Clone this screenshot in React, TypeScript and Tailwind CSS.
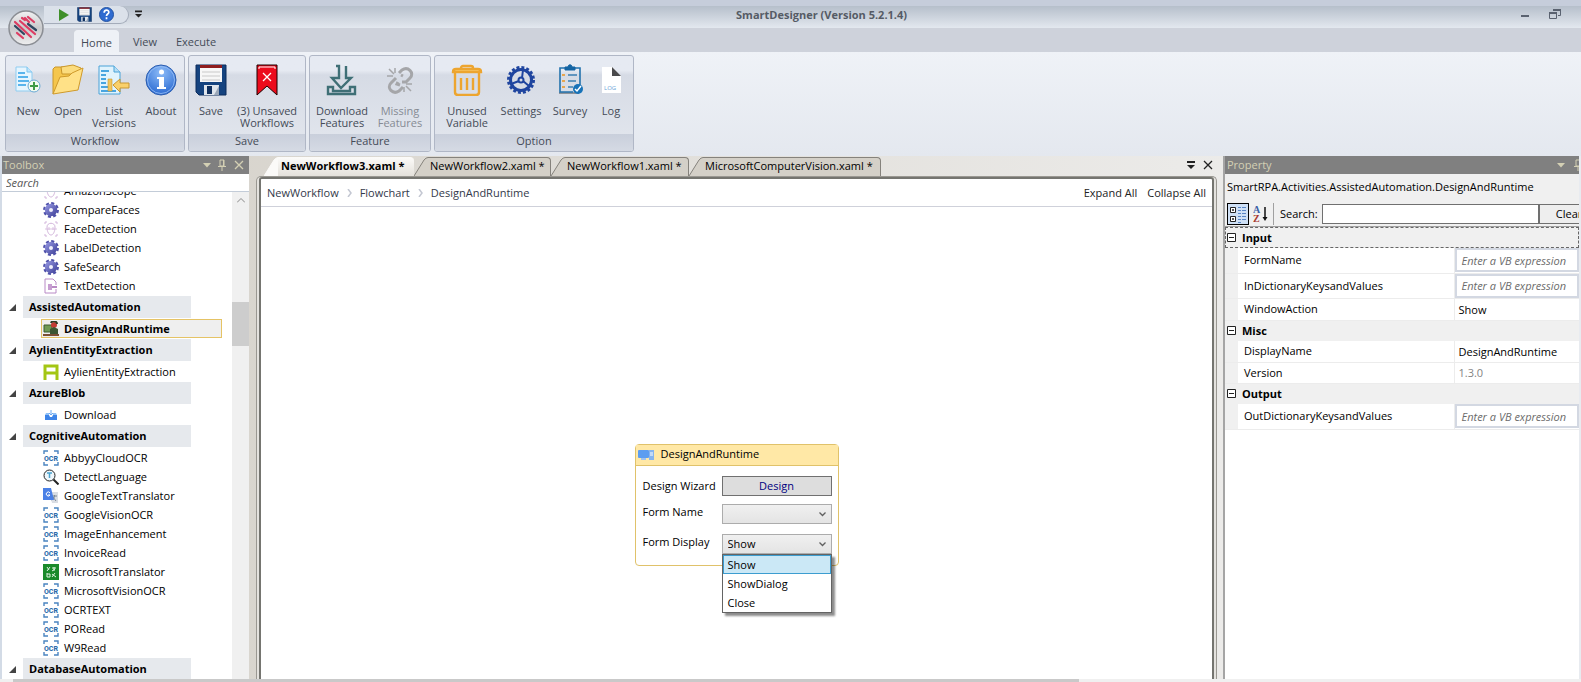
import React from "react";

type IconProps = { className?: string };

/* ---------- ribbon icons ---------- */

const FloppyIcon: React.FC<IconProps> = ({ className }) => (
  <svg viewBox="0 0 32 32" className={className}>
    <path d="M1 1h30v30H4l-3-3z" fill="#15437f" stroke="#0d2d5c" />
    <rect x="5" y="1" width="22" height="3" fill="#8f1d1f" />
    <rect x="5" y="4" width="22" height="14" fill="#f7f7f7" />
    <path d="M7 8h18M7 12h18M7 16h18" stroke="#c9c9c9" />
    <rect x="9" y="21" width="15" height="10" fill="#dfe5ec" />
    <rect x="12" y="22" width="5" height="8" fill="#0f2f5e" />
    <path d="M19 31l5-9v9z" fill="#9aa7b8" />
  </svg>
);

const NewIcon = () => (
  <svg viewBox="0 0 32 32" className="h-8 w-8">
    <path d="M4 3h11l5 5v19H4z" fill="#e6f5fe" stroke="#8fcdf1" />
    <path d="M15 3v5h5" fill="#bfe4fa" stroke="#7cc4ee" />
    <path d="M6 9h7M6 13h10M6 17h11M6 21h8" stroke="#58b4ec" strokeWidth="2" />
    <circle cx="22" cy="22" r="6" fill="#f2faf0" stroke="#6aa9d4" />
    <path d="M22 18v8M18 22h8" stroke="#3f9b46" strokeWidth="2" />
  </svg>
);

const OpenIcon = () => (
  <svg viewBox="0 0 32 32" className="h-8 w-8">
    <path d="M1 30V5l2-2h8l2 2h15v7" fill="#f5c64d" stroke="#c9962a" />
    <path d="M9 3l12-2 8 3v6H10z" fill="#fbdc7e" stroke="#c9962a" />
    <path d="M1 30L8 13l9-1 3-3 11-5-5 22z" fill="#ffe187" stroke="#cf9a2b" />
  </svg>
);

const VersionsIcon = () => (
  <svg viewBox="0 0 32 32" className="h-8 w-8">
    <path d="M1 2h15l6 6v22H1z" fill="#e0f3fd" stroke="#4ba3d8" />
    <path d="M16 2v6h6" fill="#b5def5" stroke="#4ba3d8" />
    <path d="M3 7h8M3 11h5M3 15h5M3 19h5M3 23h8M3 27h15" stroke="#48a5e0" strokeWidth="2" />
    <path d="M10 15h4v12h-4z" fill="#f3c65b" stroke="#c89732" strokeWidth=".6" />
    <path d="M15 21l7-6v4h9v5h-9v4z" fill="#fad06a" stroke="#c89732" />
  </svg>
);

const AboutIcon = () => (
  <svg viewBox="0 0 32 32" className="h-8 w-8">
    <defs>
      <radialGradient id="about" cx=".5" cy=".25" r=".8">
        <stop offset="0" stopColor="#8dbcf8" />
        <stop offset="1" stopColor="#2465cf" />
      </radialGradient>
    </defs>
    <circle cx="16" cy="16" r="15" fill="url(#about)" stroke="#2a5cae" />
    <circle cx="16" cy="16" r="13.500" fill="none" stroke="#9cc2f5" strokeWidth=".8" />
    <circle cx="16.500" cy="8" r="2.500" fill="#fff" />
    <path d="M12 13h7v10h2v2h-9v-2h2v-8h-2z" fill="#fff" />
  </svg>
);

const UnsavedIcon = () => (
  <svg viewBox="0 0 32 32" className="h-8 w-8">
    <path d="M6 1h20v30l-10-9-10 9z" fill="#ec0b1c" stroke="#1b0000" />
    <path d="M8 5V3h16v2" fill="none" stroke="#fff" />
    <path d="M12 9l8 8M20 9l-8 8" stroke="#fff" strokeWidth="1.300" />
  </svg>
);

const DownloadIcon = () => (
  <svg viewBox="0 0 32 32" className="h-8 w-8" fill="none" stroke="#3f6f76" strokeWidth="2.400">
    <path d="M10 2h3v12H6l9 10 10-10h-5V2" />
    <path d="M2 23h5v4h17v-4h5v7H2z" />
  </svg>
);

const MissingIcon = () => (
  <svg viewBox="0 0 32 32" className="h-8 w-8" fill="none" stroke="#a5a6a9" strokeWidth="3">
    <path d="M15 9l3-3c6-4 13 3 8 8l-4 4h-4" />
    <path d="M12 14l-5 5c-5 5 2 12 8 8l4-4" />
    <path d="M14 18l-1 2 3 1M19 12l-2-1" />
    <path d="M11 4v5M3 12h6M5 5l5 5M22 22l5 5M22 20h6M20 23v5" strokeWidth="1.500" />
  </svg>
);

const TrashIcon = () => (
  <svg viewBox="0 0 32 32" className="h-8 w-8" fill="none" stroke="#eda52f" strokeWidth="2.400">
    <path d="M10 5V4c0-1 1-2 2-2h8c1 0 2 1 2 2v1" />
    <path d="M2 8c0-2 1-3 3-3h22c2 0 3 1 3 3z" fill="#fbd27a" />
    <path d="M4 9v19c0 2 1 3 3 3h18c2 0 3-1 3-3V9" />
    <path d="M10 14v12M16 14v12M22 14v12" strokeWidth="2.400" />
  </svg>
);

const SettingsIcon = () => (
  <svg viewBox="0 0 32 32" className="h-8 w-8" fill="none" stroke="#1f459f">
    <circle cx="16" cy="16" r="12.500" strokeWidth="3" strokeDasharray="2.900 2.010" />
    <circle cx="16" cy="16" r="10.500" strokeWidth="3" />
    <circle cx="16" cy="16" r="2.500" strokeWidth="2" />
    <path d="M18 17l6 5M14 17l-8 3M17 14l1-8" strokeWidth="2" />
  </svg>
);

const SurveyIcon = () => (
  <svg viewBox="0 0 32 32" className="h-8 w-8" fill="none">
    <path d="M5 29h20" stroke="#8d9299" strokeWidth="2" />
    <path d="M11 4H6v24h13M21 4h5v17" stroke="#2272ad" strokeWidth="1.600" />
    <path d="M11 6V3h3c0-3 4-3 4 0h3v3z" fill="#1565a3" stroke="#1565a3" />
    <path d="M8 11h3M8 17h3M8 23h3" stroke="#e7a650" strokeWidth="2" />
    <path d="M14 11h9M14 17h8M14 23h5" stroke="#3b7fb2" strokeWidth="1.600" />
    <circle cx="24" cy="25" r="5" fill="#1772b8" />
    <path d="M21 25l2 2 4-5" stroke="#fff" strokeWidth="1.500" />
  </svg>
);

const LogIcon = () => (
  <svg viewBox="0 0 32 32" className="h-8 w-8">
    <path d="M7 3h10l9 9v17H7z" fill="#fff" />
    <path d="M17 3l9 9h-9z" fill="#4a4a4c" />
    <text x="9" y="26" fontSize="6" fill="#6da5d8" className="font-['Open_Sans',sans-serif]">LOG</text>
  </svg>
);

/* ---------- toolbox icons ---------- */

const GearIcon = () => (
  <svg viewBox="0 0 16 16" className="h-4 w-4">
    <defs>
      <linearGradient id="gear" x1="0" y1="0" x2="1" y2="1">
        <stop offset="0" stopColor="#9a9ce6" />
        <stop offset="1" stopColor="#3d3f97" />
      </linearGradient>
    </defs>
    <circle cx="8" cy="8" r="6.700" fill="none" stroke="#5052ab" strokeWidth="2.500" strokeDasharray="3 2.260" />
    <circle cx="8" cy="8" r="6.200" fill="url(#gear)" />
    <circle cx="8" cy="8" r="2" fill="#f0f0fc" />
  </svg>
);

const FaceIcon = () => (
  <svg viewBox="0 0 16 16" className="h-4 w-4" fill="none" stroke="#d3b6dc">
    <path d="M2 3V1h2M12 1h2v2M2 13v2h2M12 15h2v-2" />
    <path d="M4 6c0-5 8-5 8 0 0 5-2 8-4 8s-4-3-4-8z" />
    <path d="M2 8h12M6 6v3M10 6v3" strokeWidth=".8" />
  </svg>
);

const TextDocIcon = () => (
  <svg viewBox="0 0 16 16" className="h-4 w-4" fill="none" stroke="#b98ac6">
    <path d="M2 1h8l3 3v3M13 11v4H2V1" />
    <path d="M5 6h4v6H5z" fill="#c79ed1" stroke="none" />
    <path d="M9 9h5" strokeWidth="2" />
  </svg>
);

const RuntimeIcon = () => (
  <svg viewBox="0 0 16 16" className="h-4 w-4">
    <path d="M1 4h8v7H1z" fill="#6f9a55" stroke="#3d5b2e" />
    <circle cx="11" cy="4" r="3" fill="#c33a34" />
    <path d="M8 2c1-3 6-2 6 1" stroke="#2f3a25" strokeWidth="2" fill="none" />
    <path d="M7 8l4-2 4 2v5H7z" fill="#3c5633" />
    <path d="M0 13h16v2H0z" fill="#7b4f36" />
  </svg>
);

const AylienIcon = () => (
  <svg viewBox="0 0 16 16" className="h-4 w-4" fill="none" stroke="#a3c614" strokeWidth="3">
    <path d="M2 16V2h12v14M2 9h12" />
  </svg>
);

const BlobIcon = () => (
  <svg viewBox="0 0 16 16" className="h-4 w-4">
    <path d="M2 8l1-2h3v2zM14 8l-1-2h-3v2z" fill="#8fc0f7" />
    <path d="M2 8h4l1 2h2l1-2h4v5H2z" fill="#3d84e8" />
    <path d="M8 3v5M6 6l2 2 2-2" stroke="#6aa7ef" fill="none" />
  </svg>
);

const OcrIcon = () => (
  <svg viewBox="0 0 16 16" className="h-4 w-4" fill="none" stroke="#4a84c0">
    <path d="M1 4V1h4M11 1h4v3M1 12v3h4M11 15h4v-3" strokeWidth="1.400" />
    <text x="8" y="10.500" fontSize="7" fontWeight="800" textAnchor="middle" stroke="none" fill="#2b6cab" className="font-['Roboto',sans-serif]">OCR</text>
  </svg>
);

const DetectIcon = () => (
  <svg viewBox="0 0 16 16" className="h-4 w-4" fill="none" stroke="#222">
    <circle cx="6.500" cy="6.500" r="5.500" fill="#eef6fb" />
    <path d="M4 4h5M6.500 4v5" stroke="#4aa3cf" strokeWidth="1.500" />
    <path d="M10.500 10.500l5 5" strokeWidth="2" />
  </svg>
);

const TranslateIcon = () => (
  <svg viewBox="0 0 16 16" className="h-4 w-4">
    <path d="M6 4h9v11H9z" fill="#d9dde3" />
    <path d="M9 8h5M11.500 7c0 3-1 4-3 5M10 9l3 4" stroke="#7a8794" fill="none" />
    <path d="M0 0h8l3 12H0z" fill="#4a80e6" />
    <path d="M7 5a2 2 0 1 0 0 2H5" stroke="#fff" fill="none" />
  </svg>
);

const MsTranslatorIcon = () => (
  <svg viewBox="0 0 16 16" className="h-4 w-4">
    <rect width="16" height="16" fill="#1a8a2b" />
    <path d="M4 3l2 3M7 3L4 7M9 4h4M11 3v4M9 7l3-2M4 9v4M4 10h3v3H4M9 10l4 3M12 9l-3 4" stroke="#dff3e0" fill="none" />
  </svg>
);

const PinIcon: React.FC<IconProps> = ({ className }) => (
  <svg viewBox="0 0 10 12" className={className} fill="none" stroke="#d4d0b4">
    <path d="M3 1h4v6H3zM6.500 1v6M1 7.500h8M5 8v4" />
  </svg>
);

const CloseIcon: React.FC<IconProps> = ({ className }) => (
  <svg viewBox="0 0 10 10" className={className} fill="none" stroke="currentColor" strokeWidth="1.300">
    <path d="M1 1l8 8M9 1L1 9" />
  </svg>
);

const TriangleIcon: React.FC<IconProps> = ({ className }) => (
  <svg viewBox="0 0 8 5" className={className} fill="currentColor">
    <path d="M0 0h8L4 4.500z" />
  </svg>
);

const OverflowIcon: React.FC<IconProps> = ({ className }) => (
  <svg viewBox="0 0 8 8" className={className} fill="currentColor">
    <path d="M0 0h8v2H0zM0 4h8L4 8z" />
  </svg>
);

const HelpIcon = () => (
  <svg viewBox="0 0 16 16" className="h-[15px] w-[15px]">
    <circle cx="8" cy="8" r="7.500" fill="#2f6bd0" stroke="#204f9e" />
    <path d="M5.500 6c0-3.500 5-3.500 5-.500 0 2-2.500 2-2.500 4M8 11v2" stroke="#fff" strokeWidth="1.800" fill="none" />
  </svg>
);

const LogoIcon = () => (
  <svg viewBox="0 0 36 36" className="h-9 w-9" fill="none" strokeLinecap="round" strokeWidth="2.200">
    <defs>
      <linearGradient id="orb" x1="0" y1="0" x2="0" y2="1">
        <stop offset="0" stopColor="#f2f2f3" />
        <stop offset=".5" stopColor="#c9cacc" />
        <stop offset="1" stopColor="#eeeeef" />
      </linearGradient>
    </defs>
    <circle cx="18" cy="18" r="17" fill="url(#orb)" stroke="#8b8e94" strokeWidth="1.500" />
    <path d="M20 7l6 5M14 8l3 2M12 11l15 13M7 12l16 15M9 23l6 5M17 8l4 4" stroke="#dd3c62" />
    <path d="M20 14l8 6M7 16l9 8" stroke="#2f4660" />
  </svg>
);

/* ---------- data ---------- */

interface RibbonItem {
  lines: string[];
  icon: React.ReactNode;
  width: string;
  disabled?: boolean;
}

interface RibbonGroup {
  title: string;
  padding: string;
  items: RibbonItem[];
}

const ribbonGroups: RibbonGroup[] = [
  {
    title: "Workflow",
    padding: "px-0.5",
    items: [
      { lines: ["New"], icon: <NewIcon />, width: "w-10" },
      { lines: ["Open"], icon: <OpenIcon />, width: "w-10" },
      { lines: ["List", "Versions"], icon: <VersionsIcon />, width: "w-[52px]" },
      { lines: ["About"], icon: <AboutIcon />, width: "w-[42px]" },
    ],
  },
  {
    title: "Save",
    padding: "px-0.5",
    items: [
      { lines: ["Save"], icon: <FloppyIcon className="h-8 w-8" />, width: "w-10" },
      { lines: ["(3) Unsaved", "Workflows"], icon: <UnsavedIcon />, width: "w-[72px]" },
    ],
  },
  {
    title: "Feature",
    padding: "px-0.5",
    items: [
      { lines: ["Download", "Features"], icon: <DownloadIcon />, width: "w-[60px]" },
      { lines: ["Missing", "Features"], icon: <MissingIcon />, width: "w-[56px]", disabled: true },
    ],
  },
  {
    title: "Option",
    padding: "pl-1.5 pr-0.5",
    items: [
      { lines: ["Unused", "Variable"], icon: <TrashIcon />, width: "w-[52px]" },
      { lines: ["Settings"], icon: <SettingsIcon />, width: "w-14" },
      { lines: ["Survey"], icon: <SurveyIcon />, width: "w-[42px]" },
      { lines: ["Log"], icon: <LogIcon />, width: "w-10" },
    ],
  },
];

interface ToolGroup {
  name?: string;
  items: { name: string; icon: React.ReactNode; selected?: boolean }[];
}

const toolGroups: ToolGroup[] = [
  {
    items: [
      { name: "AmazonScope", icon: <FaceIcon /> },
      { name: "CompareFaces", icon: <GearIcon /> },
      { name: "FaceDetection", icon: <FaceIcon /> },
      { name: "LabelDetection", icon: <GearIcon /> },
      { name: "SafeSearch", icon: <GearIcon /> },
      { name: "TextDetection", icon: <TextDocIcon /> },
    ],
  },
  {
    name: "AssistedAutomation",
    items: [{ name: "DesignAndRuntime", icon: <RuntimeIcon />, selected: true }],
  },
  {
    name: "AylienEntityExtraction",
    items: [{ name: "AylienEntityExtraction", icon: <AylienIcon /> }],
  },
  { name: "AzureBlob", items: [{ name: "Download", icon: <BlobIcon /> }] },
  {
    name: "CognitiveAutomation",
    items: [
      { name: "AbbyyCloudOCR", icon: <OcrIcon /> },
      { name: "DetectLanguage", icon: <DetectIcon /> },
      { name: "GoogleTextTranslator", icon: <TranslateIcon /> },
      { name: "GoogleVisionOCR", icon: <OcrIcon /> },
      { name: "ImageEnhancement", icon: <OcrIcon /> },
      { name: "InvoiceRead", icon: <OcrIcon /> },
      { name: "MicrosoftTranslator", icon: <MsTranslatorIcon /> },
      { name: "MicrosoftVisionOCR", icon: <OcrIcon /> },
      { name: "OCRTEXT", icon: <OcrIcon /> },
      { name: "PORead", icon: <OcrIcon /> },
      { name: "W9Read", icon: <OcrIcon /> },
    ],
  },
  { name: "DatabaseAutomation", items: [] },
];

const docTabs = [
  { name: "NewWorkflow3.xaml *", width: "w-[150px]", active: true },
  { name: "NewWorkflow2.xaml *", width: "w-[137px]" },
  { name: "NewWorkflow1.xaml *", width: "w-[138px]" },
  { name: "MicrosoftComputerVision.xaml *", width: "w-[192px]" },
];

interface Property {
  name: string;
  kind: "expression" | "text" | "readonly";
  value?: string;
  height: string;
}

const propertySections: { title: string; focused?: boolean; rows: Property[] }[] = [
  {
    title: "Input",
    focused: true,
    rows: [
      { name: "FormName", kind: "expression", height: "h-[25px]" },
      { name: "InDictionaryKeysandValues", kind: "expression", height: "h-[25px]" },
      { name: "WindowAction", kind: "text", value: "Show", height: "h-[22px]" },
    ],
  },
  {
    title: "Misc",
    rows: [
      { name: "DisplayName", kind: "text", value: "DesignAndRuntime", height: "h-[21px]" },
      { name: "Version", kind: "readonly", value: "1.3.0", height: "h-[21px]" },
    ],
  },
  {
    title: "Output",
    rows: [{ name: "OutDictionaryKeysandValues", kind: "expression", height: "h-[25px]" }],
  },
];

/* ---------- sections ---------- */

const TitleBar = () => (
  <div className="border-t-[6px] border-[#c6cddb] bg-gradient-to-b from-[#b6bfcb] to-[#e3e8ef]">
    <div className="flex h-[22px] items-start pl-11">
      <div className="flex h-[18px] w-[85px] items-center gap-[7px] rounded-r-full border-b border-r border-[#a4acba] bg-[#dbe1ea] pl-3.5">
        <button aria-label="Run">
          <svg viewBox="0 0 12 12" className="h-3 w-3">
            <path d="M1 0l10 6-10 6z" fill="#3f8f2a" />
          </svg>
        </button>
        <button aria-label="Save workflow">
          <FloppyIcon className="h-[15px] w-[15px]" />
        </button>
        <button aria-label="Help">
          <HelpIcon />
        </button>
      </div>
      <button aria-label="Customize toolbar" className="ml-1.5 mt-1">
        <OverflowIcon className="h-2 w-[7px] text-[#222]" />
      </button>
      <h1 className="flex-1 pr-5 text-center font-bold leading-[18px] text-[#555b65]">
        SmartDesigner (Version 5.2.1.4)
      </h1>
      <div className="flex items-center gap-5 pr-5 pt-0.5 text-[#5a6270]">
        <button aria-label="Minimize">
          <svg viewBox="0 0 8 12" className="h-3 w-2">
            <path d="M0 7h8v2H0z" fill="currentColor" />
          </svg>
        </button>
        <button aria-label="Restore">
          <svg viewBox="0 0 12 12" className="h-3 w-3" fill="none" stroke="currentColor">
            <path d="M4.500 3V1.500h7v6H9" />
            <path d="M4 2h8" strokeWidth="2" />
            <path d="M.5 5.500h7v5h-7z" />
            <path d="M0 5h8" strokeWidth="2" />
          </svg>
        </button>
      </div>
    </div>
  </div>
);

const Ribbon = () => (
  <header className="relative shrink-0 text-[#444b57]">
    <TitleBar />
    <button aria-label="Application menu" className="absolute left-2 top-2.5">
      <LogoIcon />
    </button>
    <nav className="flex h-6 items-end bg-[#ced2db] pl-[74px]">
      <button className="h-[22px] w-[45px] rounded-t border border-b-0 border-[#eef1f6] bg-[#eef1f6] pt-0.5">Home</button>
      <button className="ml-[7px] h-[22px] w-[38px] pt-0.5">View</button>
      <button className="ml-1 h-[22px] w-14 pt-0.5">Execute</button>
    </nav>
    <div className="flex gap-[3px] bg-gradient-to-b from-[#eff2f7] to-[#e4e8ef] px-[5px] pb-1 pt-[3px]">
      {ribbonGroups.map((group) => (
        <section
          key={group.title}
          className="flex flex-col overflow-hidden rounded-[3px] border border-[#b0b7c6] bg-gradient-to-b from-[#e6eaf2] from-15% via-[#d6dbe5] via-20% to-[#e3e7ee]"
        >
          <div className={`flex h-[78px] pt-2 ${group.padding}`}>
            {group.items.map((item) => (
              <button
                key={item.lines.join(" ")}
                disabled={item.disabled}
                className={`flex flex-col items-center whitespace-nowrap leading-3 ${item.width} ${
                  item.disabled ? "text-[#868b94]" : ""
                }`}
              >
                {item.icon}
                <span className="pt-[9px]">
                  {item.lines.map((line) => (
                    <span key={line} className="block">
                      {line}
                    </span>
                  ))}
                </span>
              </button>
            ))}
          </div>
          <h2 className="h-[17px] bg-gradient-to-b from-[#c9cfdb] to-[#d5dae4] text-center leading-[14px]">
            {group.title}
          </h2>
        </section>
      ))}
    </div>
  </header>
);

const Toolbox = () => (
  <aside className="flex w-[249px] shrink-0 flex-col border-l-2 border-[#d3dbe6] bg-white">
    <div className="flex h-[18px] shrink-0 items-center bg-[#808080] px-px text-[#d4d0b4]">
      <h2 className="flex-1">Toolbox</h2>
      <button aria-label="Toolbox options">
        <TriangleIcon className="h-[5px] w-2" />
      </button>
      <button aria-label="Pin toolbox" className="ml-1.5">
        <PinIcon className="h-3 w-2.5" />
      </button>
      <button aria-label="Close toolbox" className="ml-[7px] pr-1">
        <CloseIcon className="h-2.5 w-2.5" />
      </button>
    </div>
    <input
      aria-label="Search toolbox"
      placeholder="Search"
      className="h-[18px] shrink-0 border-b border-[#c3ccd8] px-1 italic outline-none placeholder:text-[#555]"
    />
    <div className="flex min-h-0 flex-1">
      <div className="min-w-0 flex-1 overflow-hidden">
        <div className="-mt-3">
          {toolGroups.map((group) => (
            <section key={group.name ?? "top"}>
              {group.name && (
                <div className="flex h-[22px] items-center pl-[7px]">
                  <svg viewBox="0 0 7 7" className="h-[7px] w-[7px]">
                    <path d="M7 0v7H0z" fill="#444" />
                  </svg>
                  <h3 className="ml-[7px] h-[22px] w-[168px] bg-[#e6e9ed] pl-1.5 font-bold leading-[22px] text-black">
                    {group.name}
                  </h3>
                </div>
              )}
              <ul className="py-px">
                {group.items.map((item) => (
                  <li
                    key={item.name}
                    className={`ml-[39px] flex h-[19px] w-[181px] items-center gap-[5px] whitespace-nowrap border pl-px text-black ${
                      item.selected ? "border-[#e5c365] bg-[#efefef] font-bold" : "border-transparent"
                    }`}
                  >
                    {item.icon}
                    <span>{item.name}</span>
                  </li>
                ))}
              </ul>
            </section>
          ))}
        </div>
      </div>
      <div className="flex w-[17px] flex-col items-center bg-[#f0f0f0]">
        <svg viewBox="0 0 8 5" className="mt-1.5 h-[5px] w-2" fill="none" stroke="#888">
          <path d="M0 4.500l4-4 4 4" />
        </svg>
        <div className="mt-[99px] h-11 w-full bg-[#cdcdcd]" />
      </div>
    </div>
  </aside>
);

const comboClass =
  "h-5 w-[110px] appearance-none border border-[#acacac] bg-gradient-to-b from-[#f0f0f0] to-[#e4e4e4] px-[5px] text-black";

const ComboArrow = () => (
  <svg viewBox="0 0 7 5" className="pointer-events-none absolute right-1.5 top-2 h-[5px] w-[7px]" fill="none" stroke="#606060">
    <path d="M.5.500l3 3 3-3" strokeWidth="1.300" />
  </svg>
);

const ActivityCard = () => (
  <div className="mx-auto mt-[237px] h-[122px] w-[204px] rounded-sm border border-[#e0c26a] bg-white text-black">
    <div className="flex h-[21px] items-center gap-[7px] border-b border-[#e0c26a] bg-[#ffe8a6] pl-0.5">
      <svg viewBox="0 0 16 12" className="h-3 w-4">
        <rect x="0" y="1" width="11" height="8" rx="1" fill="#5c9df0" />
        <path d="M3 9h5v2H3z" fill="#9ec2f0" />
        <rect x="11" y="1" width="5" height="10" fill="#86b4ee" />
        <path d="M12 4h3M12 6h3" stroke="#fff" />
      </svg>
      <span className="pb-0.5">DesignAndRuntime</span>
    </div>
    <div className="flex flex-col gap-2 pl-[7px] pt-2.5">
      <div className="flex h-5 items-center">
        <span className="w-[79px]">Design Wizard</span>
        <button className="h-5 w-[110px] border border-[#707070] bg-[#dddddd] text-[#000080]">Design</button>
      </div>
      <div className="flex h-[22px]">
        <label htmlFor="form-name" className="w-[79px]">Form Name</label>
        <div className="relative">
          <select id="form-name" className={comboClass} defaultValue="">
            <option value="" />
          </select>
          <ComboArrow />
        </div>
      </div>
      <div className="flex h-5">
        <label htmlFor="form-display" className="w-[79px]">Form Display</label>
        <div className="relative">
          <select id="form-display" className={comboClass} defaultValue="Show">
            <option>Show</option>
            <option>ShowDialog</option>
            <option>Close</option>
          </select>
          <ComboArrow />
          <ul className="absolute left-0 top-full w-[110px] border border-[#646464] bg-white shadow-[3px_3px_2px_rgba(0,0,0,0.45)]">
            <li className="h-[19px] border border-[#3c9dd0] bg-[#cbe8f6] px-1 leading-[17px]">Show</li>
            <li className="h-[19px] px-[5px] leading-[19px]">ShowDialog</li>
            <li className="h-[19px] px-[5px] leading-[19px]">Close</li>
          </ul>
        </div>
      </div>
    </div>
  </div>
);

const Crumb: React.FC<{ children: React.ReactNode }> = ({ children }) => (
  <a href="#" className="text-[#33394a]">
    {children}
  </a>
);

const CrumbArrow = () => (
  <svg viewBox="0 0 5 8" className="mx-2 h-2 w-[5px]" fill="none" stroke="#c3c7d2" strokeWidth="1.500">
    <path d="M1 0l3 4-3 4" />
  </svg>
);

const Designer = () => (
  <main className="flex min-w-0 flex-1 flex-col pl-[7px] pr-1.5">
    <div className="flex h-[20px] shrink-0 items-end pl-2">
      {docTabs.map((tab) => (
        <button key={tab.name} className={`flex h-[19px] shrink-0 ${tab.width}`}>
          <svg viewBox="0 0 14 19" className="h-[19px] w-3.5 shrink-0">
            <path
              d="M0 19L10 3Q12 .5 14 .500V19z"
              fill={tab.active ? "#fbfaf8" : "#d4d0c8"}
            />
            <path
              d="M0 19L10 3Q12 .5 14 .500"
              fill="none"
              stroke={tab.active ? "#fbfaf8" : "#85827c"}
            />
          </svg>
          <span
            className={`h-[19px] flex-1 whitespace-nowrap rounded-tr-sm border-t text-left leading-[15px] text-black ${
              tab.active
                ? "border-[#fbfaf8] bg-gradient-to-b from-[#fbfaf8] to-[#e4e1db] pl-[3px] font-bold"
                : "border-r border-[#85827c] bg-[#d4d0c8] pl-0.5"
            }`}
          >
            {tab.name}
          </span>
        </button>
      ))}
      <div className="flex flex-1 items-center justify-end gap-2 pb-1.5 pr-1 text-[#222]">
        <button aria-label="Open documents">
          <OverflowIcon className="h-2 w-2" />
        </button>
        <button aria-label="Close document">
          <CloseIcon className="h-2.5 w-2.5" />
        </button>
      </div>
    </div>
    <div className="flex min-h-0 flex-1 flex-col rounded-t-[5px] border border-b-0 border-[#9a9892] bg-[#e4e2de] px-0.5">
      <div className="flex min-h-0 flex-1 flex-col rounded-t-[3px] border-2 border-b-0 border-[#757570] bg-white">
        <div className="flex h-[28px] shrink-0 items-center border-b border-[#cfd1da] px-1.5">
          <nav className="flex flex-1 items-center">
            <Crumb>NewWorkflow</Crumb>
            <CrumbArrow />
            <Crumb>Flowchart</Crumb>
            <CrumbArrow />
            <Crumb>DesignAndRuntime</Crumb>
          </nav>
          <button className="text-[#222]">Expand All</button>
          <button className="ml-2.5 text-[#222]">Collapse All</button>
        </div>
        <div className="min-h-0 flex-1">
          <ActivityCard />
        </div>
      </div>
    </div>
  </main>
);

const PropertyPanel = () => (
  <aside className="flex w-[358px] shrink-0 flex-col overflow-hidden border-l-2 border-r-2 border-l-[#a5a5a5] border-r-[#e8ebf0] bg-white text-black">
    <div className="flex h-[18px] shrink-0 items-center bg-[#808080] pl-0.5 text-[#d4d0b4]">
      <h2 className="flex-1">Property</h2>
      <button aria-label="Property options">
        <TriangleIcon className="h-[5px] w-2" />
      </button>
      <button aria-label="Pin property" className="-mr-1 ml-2">
        <PinIcon className="h-3 w-2.5" />
      </button>
    </div>
    <div className="bg-[#f0f0f0]">
      <p className="h-[29px] whitespace-nowrap pl-0.5 leading-[26px]">
        SmartRPA.Activities.AssistedAutomation.DesignAndRuntime
      </p>
      <div className="flex h-6 items-start border-b border-[#a0a0a0] pl-0.5">
        <button aria-label="Categorized" className="h-[22px] w-[22px] border border-black bg-[#cfe0f5]">
          <svg viewBox="0 0 20 20" className="h-5 w-5" fill="none" stroke="#222">
            <path d="M2.500 3.500h5v5h-5zM2.500 12.500h5v5h-5z" fill="#fff" />
            <path d="M4 6h2M5 5v2M4 15h2M5 14v2" />
            <path d="M10 3.500h3M14 3.500h4M10 6.500h3M14 6.500h4M10 9.500h3M14 9.500h4M10 12.500h3M14 12.500h4M10 15.500h3M14 15.500h4M10 18.500h3" stroke="#5a86c5" />
          </svg>
        </button>
        <button aria-label="Alphabetical" className="ml-1 h-[22px] w-4">
          <svg viewBox="0 0 16 20" className="h-5 w-4">
            <text x="0" y="9" fontSize="10" fontWeight="700" fill="#3a5fa5" className="font-['Liberation_Serif',serif]">A</text>
            <text x="0" y="18" fontSize="10" fontWeight="700" fill="#a8382e" className="font-['Liberation_Serif',serif]">Z</text>
            <path d="M12 3v12" stroke="#111" strokeWidth="1.500" />
            <path d="M9.500 13h5L12 17z" fill="#111" />
          </svg>
        </button>
        <label htmlFor="property-search" className="ml-1 h-[22px] border-l border-[#a0a0a0] pl-1.5 leading-[22px]">
          Search:
        </label>
        <input id="property-search" className="ml-auto mt-px h-5 w-[217px] shrink-0 border border-[#707070] bg-white px-1" />
        <button className="-mr-5 mt-px h-5 w-[60px] shrink-0 border border-[#707070] bg-[#eeeeee]">Clear</button>
      </div>
    </div>
    <table className="w-full table-fixed border-collapse">
      <colgroup>
        <col className="w-[13px]" />
        <col />
        <col className="w-[124px]" />
      </colgroup>
      {propertySections.map((section) => (
        <tbody key={section.title}>
          <tr className={`h-[21px] bg-[#f0f0f0] ${section.focused ? "outline-1 -outline-offset-1 outline-dashed outline-[#666]" : ""}`}>
            <th colSpan={3} className="p-0 text-left font-bold">
              <div className="flex items-center gap-1.5 pl-0.5">
                <svg viewBox="0 0 9 9" className="h-[9px] w-[9px]" fill="#fff" stroke="#222">
                  <path d="M.5.500h8v8h-8zM2 4.500h5" />
                </svg>
                {section.title}
              </div>
            </th>
          </tr>
          {section.rows.map((row) => (
            <tr key={row.name} className={`border-b border-[#ececec] ${row.height}`}>
              <td className="bg-[#f0f0f0] p-0" />
              <td className="border-r border-[#ececec] p-0 pl-1.5">{row.name}</td>
              <td className="p-0">
                {row.kind === "expression" && (
                  <input
                    aria-label={row.name}
                    placeholder="Enter a VB expression"
                    className="block h-6 w-full border-2 border-[#d3d8e2] bg-white px-1 italic placeholder:text-[#6b6b6b]"
                  />
                )}
                {row.kind === "text" && (
                  <input aria-label={row.name} defaultValue={row.value} className="block h-5 w-full px-[3px]" />
                )}
                {row.kind === "readonly" && <span className="px-[3px] text-[#838383]">{row.value}</span>}
              </td>
            </tr>
          ))}
        </tbody>
      ))}
    </table>
  </aside>
);

const App = () => (
  <div className="flex h-screen flex-col overflow-hidden bg-[#e4e8ef] font-['Open_Sans','Noto_Sans',sans-serif] text-[11px] leading-4">
    <Ribbon />
    <div className="flex min-h-0 flex-1 bg-gradient-to-r from-[#d4d0c8] to-[#f3f3f3]">
      <Toolbox />
      <Designer />
      <PropertyPanel />
    </div>
    <div className="h-[3px] shrink-0 bg-[#f0f0f0] pl-[13px]">
      <div className="h-full w-[68%] bg-[#c9c9c9]" />
    </div>
  </div>
);

export default App;
